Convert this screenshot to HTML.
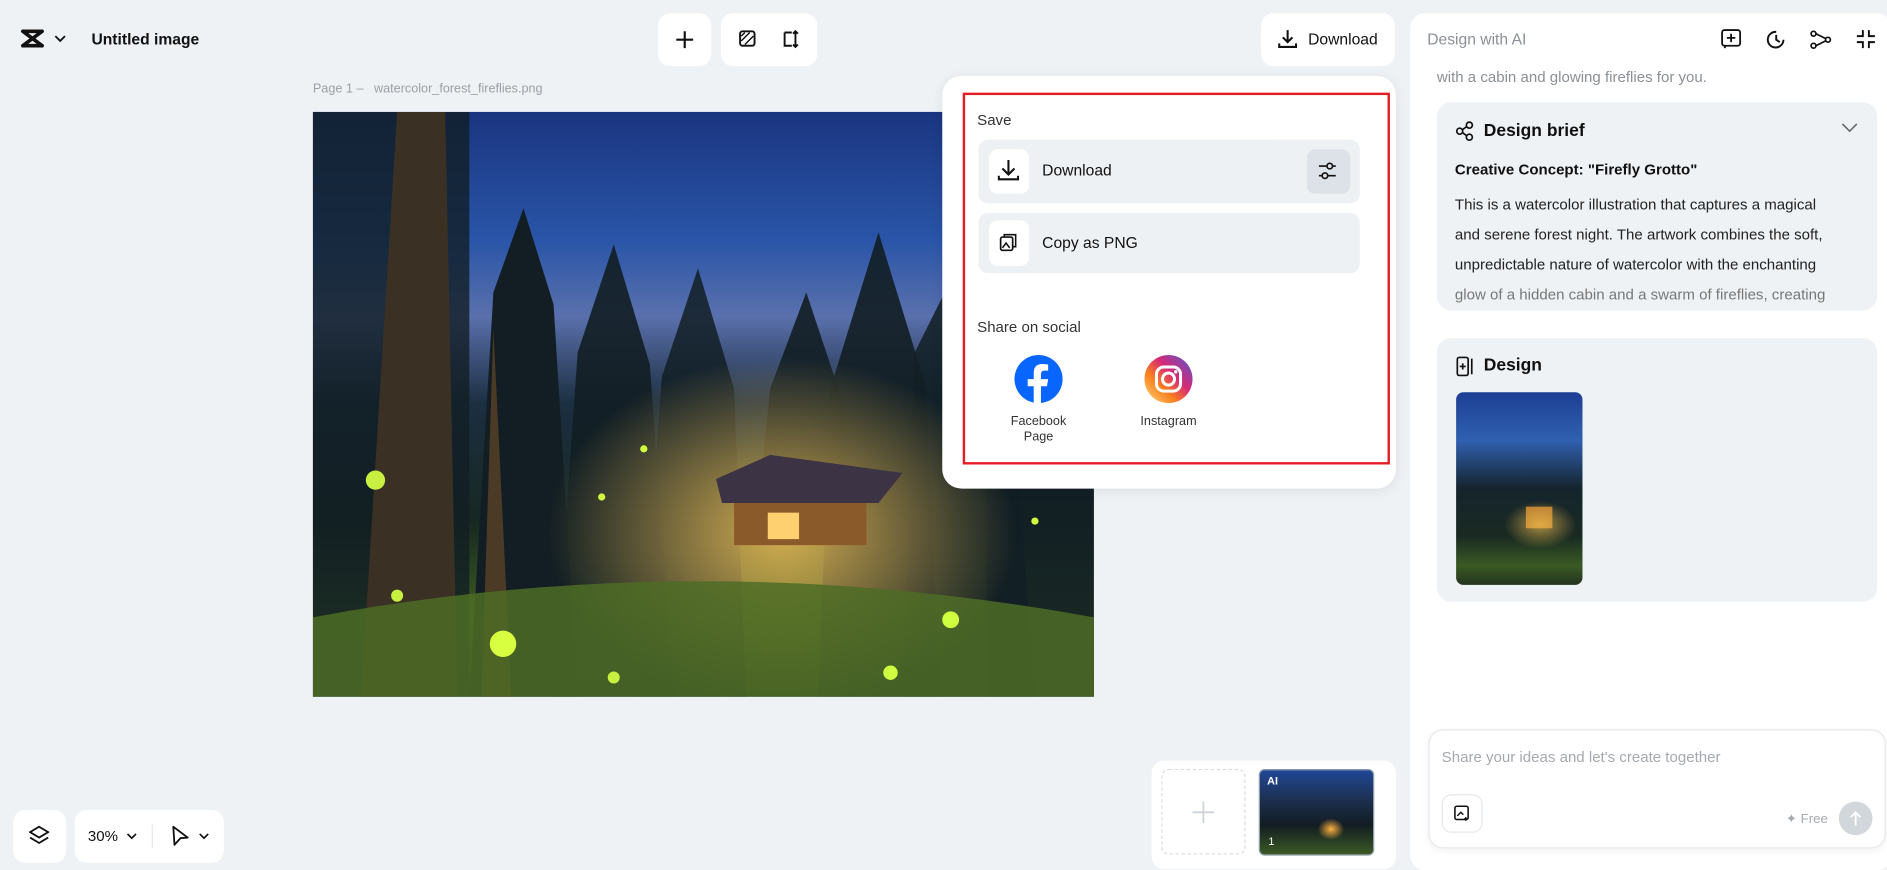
<!DOCTYPE html>
<html><head><meta charset="utf-8"><style>
*{box-sizing:border-box;margin:0;padding:0}
html,body{width:1887px;height:865px;overflow:hidden;background:#eef2f5;font-family:"Liberation Sans",sans-serif;color:#111}
#w{position:absolute;left:0;top:0;width:1568px;height:719px;transform:scale(1.2034);transform-origin:0 0}
.a{position:absolute}
.box{position:absolute;background:#fff;border-radius:10px}
.t{position:absolute;white-space:nowrap}
svg{position:absolute}
</style></head><body><div id="w">
<svg style="left:17px;top:24px" width="22" height="16" viewBox="0 0 22 16"><path d="M2 2 L18 14 M2 14 L18 2 M2 2 H18 M2 14 H18" stroke="#111" stroke-width="3" fill="none" stroke-linecap="round"/></svg>
<svg style="left:45px;top:29px" width="10" height="7" viewBox="0 0 10 7"><path d="M1 1 L5 5 L9 1" stroke="#111" stroke-width="1.5" fill="none"/></svg>
<div class="t" style="left:76px;top:25px;font-size:13px;font-weight:bold">Untitled image</div>
<div class="box" style="left:547px;top:11px;width:44px;height:44px"></div>
<svg style="left:561px;top:25px" width="16" height="16"><path d="M8 1V15M1 8H15" stroke="#111" stroke-width="1.8"/></svg>
<div class="box" style="left:599px;top:11px;width:80px;height:44px"></div>
<svg style="left:614px;top:25px" width="14" height="14"><rect x="1" y="1" width="12" height="12" rx="2" stroke="#111" stroke-width="1.6" fill="none"/><path d="M2 9L9 2M5 12L12 5M2 5L5 2" stroke="#111" stroke-width="1.2"/></svg>
<svg style="left:649px;top:24px" width="16" height="17"><path d="M3 3H9M3 3V14H9M12 2V15M10 4L12 2L14 4M10 13L12 15L14 13" stroke="#111" stroke-width="1.6" fill="none"/></svg>
<div class="box" style="left:1048px;top:11px;width:111px;height:44px"></div>
<svg style="left:1062px;top:24px" width="16" height="17"><path d="M8 1V11M4 7L8 11L12 7M1 12V15H15V12" stroke="#111" stroke-width="1.7" fill="none"/></svg>
<div class="t" style="left:1087px;top:25px;font-size:13px;font-weight:500">Download</div>
<div class="t" style="left:260px;top:68px;font-size:10.5px;color:#9aa0a6">Page 1 –&nbsp;&nbsp; watercolor_forest_fireflies.png</div>
<div class="a" style="left:260px;top:93px;width:649px;height:486px;overflow:hidden;background:linear-gradient(180deg,#1a3580 0%,#2a55a8 22%,#5a70ac 35%,#1c2e40 50%,#172822 70%,#3e5a22 86%,#24331e 100%)">
<svg style="left:0;top:0" width="649" height="486">
<defs><radialGradient id="g" cx="0.6" cy="0.72" r="0.3"><stop offset="0" stop-color="#f5c55a" stop-opacity=".85"/><stop offset="1" stop-color="#f5c55a" stop-opacity="0"/></radialGradient></defs>
<g fill="#121e24">
<path d="M0 0H130V486H0Z" opacity=".8"/>
<path d="M150 150L175 80L200 160L220 486H130Z"/>
<path d="M220 200L250 110L280 210L300 486H200Z" opacity=".9"/>
<path d="M290 220L320 130L350 230L360 486H270Z" opacity=".85"/>
<path d="M430 230L470 100L510 230L520 486H420Z" opacity=".9"/>
<path d="M500 200L540 120L580 220L600 486H490Z" opacity=".85"/>
<path d="M560 0H649V486H560Z" opacity=".85"/>
<path d="M380 230L410 150L440 240L450 330H370Z" opacity=".9"/>
</g>
<path d="M70 0H110L120 486H40Z" fill="#3a3024"/>
<path d="M150 180L165 486H140Z" fill="#4a3a26"/>
<rect width="649" height="486" fill="url(#g)"/>
<rect x="350" y="300" width="110" height="60" fill="#8a5a2a"/>
<path d="M335 305L380 285L490 300L470 325H340Z" fill="#3c3444"/>
<rect x="378" y="333" width="26" height="22" fill="#ffd070"/>
<path d="M0 420Q320 360 649 420V486H0Z" fill="#4e6c26" opacity=".85"/>
<circle cx="158" cy="442" r="11" fill="#d8ff40"/><circle cx="52" cy="306" r="8" fill="#c8f040"/>
<circle cx="530" cy="422" r="7" fill="#d0ff40"/><circle cx="480" cy="466" r="6" fill="#d0ff40"/>
<circle cx="70" cy="402" r="5" fill="#c8f040"/><circle cx="250" cy="470" r="5" fill="#c8f040"/>
<circle cx="275" cy="280" r="3" fill="#d0ff40"/><circle cx="240" cy="320" r="3" fill="#d0ff40"/><circle cx="600" cy="340" r="3" fill="#d0ff40"/>
</svg></div>
<div class="a" style="left:783px;top:63px;width:377px;height:343px;background:#fff;border-radius:16px;box-shadow:0 2px 10px rgba(0,0,0,.08)"></div>
<div class="a" style="left:800px;top:77px;width:355px;height:309px;border:2px solid #e41e26"></div>
<div class="t" style="left:812px;top:93px;font-size:12.5px;color:#333">Save</div>
<div class="a" style="left:813px;top:116px;width:317px;height:53px;background:#eef1f4;border-radius:8px"></div>
<div class="box" style="left:822px;top:124px;width:33px;height:37px;border-radius:7px"></div>
<svg style="left:829px;top:132px" width="18" height="19"><path d="M9 1V12M4 8L9 13L14 8M1 14V17H17V14" stroke="#111" stroke-width="1.7" fill="none"/></svg>
<div class="t" style="left:866px;top:134px;font-size:13px;font-weight:500">Download</div>
<div class="a" style="left:1086px;top:124px;width:36px;height:37px;background:#dde2e8;border-radius:7px"></div>
<svg style="left:1094px;top:133px" width="18" height="18"><path d="M2 5H16M2 13H16" stroke="#111" stroke-width="1.4"/><circle cx="11" cy="5" r="2.3" fill="#dde2e8" stroke="#111" stroke-width="1.4"/><circle cx="7" cy="13" r="2.3" fill="#dde2e8" stroke="#111" stroke-width="1.4"/></svg>
<div class="a" style="left:813px;top:177px;width:317px;height:50px;background:#eef1f4;border-radius:8px"></div>
<div class="box" style="left:822px;top:183px;width:33px;height:38px;border-radius:7px"></div>
<svg style="left:830px;top:193px" width="16" height="17"><rect x="1.5" y="4" width="10" height="11" rx="1.5" stroke="#111" stroke-width="1.4" fill="none"/><path d="M4.5 4V2H14V12H11.5M3 13L6 9L9 13" stroke="#111" stroke-width="1.3" fill="none"/></svg>
<div class="t" style="left:866px;top:194px;font-size:13px;font-weight:500">Copy as PNG</div>
<div class="t" style="left:812px;top:265px;font-size:12.5px;color:#333">Share on social</div>
<svg style="left:843px;top:295px" width="40" height="40"><circle cx="20" cy="20" r="20" fill="#0866ff"/><path d="M22 40V26H27L28 20H22V16Q22 13 25 13H28V8Q26 7.5 23 7.5Q16 7.5 16 15V20H11V26H16V40Z" fill="#fff"/></svg>
<div class="t" style="left:823px;top:344px;width:80px;text-align:center;font-size:10.5px;color:#333;line-height:13px;white-space:normal">Facebook<br>Page</div>
<svg style="left:951px;top:295px" width="40" height="40"><defs><linearGradient id="ig" x1="0" y1="1" x2="1" y2="0"><stop offset="0" stop-color="#feda75"/><stop offset=".35" stop-color="#fa7e1e"/><stop offset=".6" stop-color="#d62976"/><stop offset="1" stop-color="#4f5bd5"/></linearGradient></defs><circle cx="20" cy="20" r="20" fill="url(#ig)"/><rect x="10" y="10" width="20" height="20" rx="6" stroke="#fff" stroke-width="2.5" fill="none"/><circle cx="20" cy="20" r="5" stroke="#fff" stroke-width="2.5" fill="none"/><circle cx="26" cy="14" r="1.4" fill="#fff"/></svg>
<div class="t" style="left:931px;top:344px;width:80px;text-align:center;font-size:10.5px;color:#333">Instagram</div>
<div class="box" style="left:1172px;top:11px;width:400px;height:712px;border-radius:12px"></div>
<div class="t" style="left:1186px;top:25px;font-size:13px;color:#8a9096">Design with AI</div>
<svg style="left:1430px;top:24px" width="17" height="17"><rect x="1" y="1" width="15" height="13" rx="2" stroke="#111" stroke-width="1.5" fill="none"/><path d="M8.5 4V11M5 7.5H12M4 14L3 16" stroke="#111" stroke-width="1.5"/></svg>
<svg style="left:1467px;top:24px" width="18" height="18"><path d="M15 9A6.5 6.5 0 1 1 9 2.5" stroke="#111" stroke-width="1.6" fill="none"/><path d="M9 5V9L12 11" stroke="#111" stroke-width="1.6" fill="none"/></svg>
<svg style="left:1504px;top:24px" width="18" height="18"><circle cx="3" cy="4" r="2" stroke="#111" stroke-width="1.4" fill="none"/><circle cx="3" cy="14" r="2" stroke="#111" stroke-width="1.4" fill="none"/><circle cx="15" cy="9" r="2" stroke="#111" stroke-width="1.4" fill="none"/><path d="M5 4L13 8M5 14L13 10" stroke="#111" stroke-width="1.4"/></svg>
<svg style="left:1542px;top:24px" width="17" height="17"><path d="M6 1V6H1M11 1V6H16M6 16V11H1M11 16V11H16" stroke="#111" stroke-width="1.6" fill="none"/></svg>
<div class="t" style="left:1194px;top:57px;font-size:12.5px;color:#8a9096">with a cabin and glowing fireflies for you.</div>
<div class="a" style="left:1194px;top:85px;width:366px;height:173px;background:#eef2f5;border-radius:12px"></div>
<svg style="left:1209px;top:100px" width="17" height="18"><circle cx="12" cy="4" r="2.5" stroke="#111" stroke-width="1.4" fill="none"/><circle cx="4" cy="9" r="2.5" stroke="#111" stroke-width="1.4" fill="none"/><circle cx="12" cy="14" r="2.5" stroke="#111" stroke-width="1.4" fill="none"/><path d="M6 8L10 5M6 10L10 13" stroke="#111" stroke-width="1.4"/></svg>
<div class="t" style="left:1233px;top:101px;font-size:14.5px;font-weight:bold">Design brief</div>
<svg style="left:1530px;top:102px" width="14" height="8"><path d="M1 1L7 7L13 1" stroke="#666" stroke-width="1.3" fill="none"/></svg>
<div class="t" style="left:1209px;top:134px;font-size:12.5px;font-weight:bold">Creative Concept: "Firefly Grotto"</div>
<div class="a" style="left:1209px;top:158px;width:345px;font-size:12.5px;line-height:25px;color:#222">This is a watercolor illustration that captures a magical<br>and serene forest night. The artwork combines the soft,<br>unpredictable nature of watercolor with the enchanting<br><span style="color:#777">glow of a hidden cabin and a swarm of fireflies, creating</span></div>
<div class="a" style="left:1194px;top:281px;width:366px;height:219px;background:#eef2f5;border-radius:12px"></div>
<svg style="left:1210px;top:296px" width="15" height="17"><rect x="1" y="1" width="9" height="15" rx="1.5" stroke="#111" stroke-width="1.4" fill="none"/><path d="M5.5 6V11M3 8.5H8M13 2V15" stroke="#111" stroke-width="1.4"/></svg>
<div class="t" style="left:1233px;top:296px;font-size:14.5px;font-weight:bold">Design</div>
<div class="a" style="left:1210px;top:326px;width:105px;height:160px;border-radius:6px;overflow:hidden;background:linear-gradient(180deg,#1d3f93 0%,#3060b0 25%,#15242c 50%,#1a2a22 75%,#3a5a24 90%,#23331e 100%)"><div class="a" style="left:58px;top:95px;width:22px;height:18px;background:#b57a30"></div><div class="a" style="left:40px;top:90px;width:60px;height:40px;background:radial-gradient(#f4c050aa,transparent 70%)"></div></div>
<div class="a" style="left:1187px;top:606px;width:380px;height:99px;background:#fff;border:1px solid #e4e8ec;border-radius:12px;box-shadow:0 2px 6px rgba(0,0,0,.05)"></div>
<div class="t" style="left:1198px;top:622px;font-size:12.5px;color:#a4aab0">Share your ideas and let's create together</div>
<div class="a" style="left:1198px;top:660px;width:34px;height:32px;border:1px solid #e4e8ec;border-radius:8px"></div>
<svg style="left:1208px;top:669px" width="14" height="14"><rect x="1" y="1" width="11" height="11" rx="1.5" stroke="#111" stroke-width="1.3" fill="none"/><path d="M3 9L6 6L8 8M10 10V13M8.5 11.5H11.5" stroke="#111" stroke-width="1.2" fill="none"/></svg>
<div class="t" style="left:1484px;top:674px;font-size:11px;color:#a4aab0">✦ Free</div>
<div class="a" style="left:1528px;top:666px;width:28px;height:28px;border-radius:50%;background:#d2d7dc"></div>
<svg style="left:1536px;top:673px" width="12" height="14"><path d="M6 13V2M2 6L6 2L10 6" stroke="#fff" stroke-width="1.5" fill="none"/></svg>
<div class="box" style="left:11px;top:673px;width:44px;height:44px"></div>
<svg style="left:24px;top:686px" width="17" height="17"><path d="M8.5 1L16 5.5L8.5 10L1 5.5Z" stroke="#111" stroke-width="1.5" fill="none"/><path d="M1 10L8.5 14.5L16 10" stroke="#111" stroke-width="1.5" fill="none"/></svg>
<div class="box" style="left:62px;top:673px;width:124px;height:44px"></div>
<div class="t" style="left:73px;top:688px;font-size:12.5px">30%</div>
<svg style="left:105px;top:692px" width="9" height="6"><path d="M1 1L4.5 4.5L8 1" stroke="#111" stroke-width="1.4" fill="none"/></svg>
<div class="a" style="left:126px;top:685px;width:1px;height:20px;background:#e2e6ea"></div>
<svg style="left:142px;top:686px" width="15" height="18"><path d="M2 1L14 10L8 10.5L3 16Z" stroke="#111" stroke-width="1.5" fill="none" stroke-linejoin="round"/></svg>
<svg style="left:165px;top:692px" width="9" height="6"><path d="M1 1L4.5 4.5L8 1" stroke="#111" stroke-width="1.4" fill="none"/></svg>
<div class="box" style="left:957px;top:632px;width:203px;height:90px"></div>
<div class="a" style="left:965px;top:639px;width:70px;height:71px;border:1px dashed #d6dadf;border-radius:6px"></div>
<svg style="left:990px;top:665px" width="20" height="20"><path d="M10 1V19M1 10H19" stroke="#cfd4d9" stroke-width="1.5"/></svg>
<div class="a" style="left:1046px;top:639px;width:96px;height:72px;border-radius:5px;border:1.5px solid #8a9aa8;overflow:hidden;background:linear-gradient(180deg,#1f4796 0%,#1e3050 35%,#121c22 65%,#3c5a24 100%)"><div class="a" style="left:48px;top:40px;width:22px;height:18px;background:radial-gradient(#ffb040,transparent 70%)"></div><div class="t" style="left:6px;top:4px;font-size:9px;color:#fff;font-weight:bold">AI</div><div class="t" style="left:7px;top:54px;font-size:9px;color:#fff">1</div></div>
</div></body></html>
